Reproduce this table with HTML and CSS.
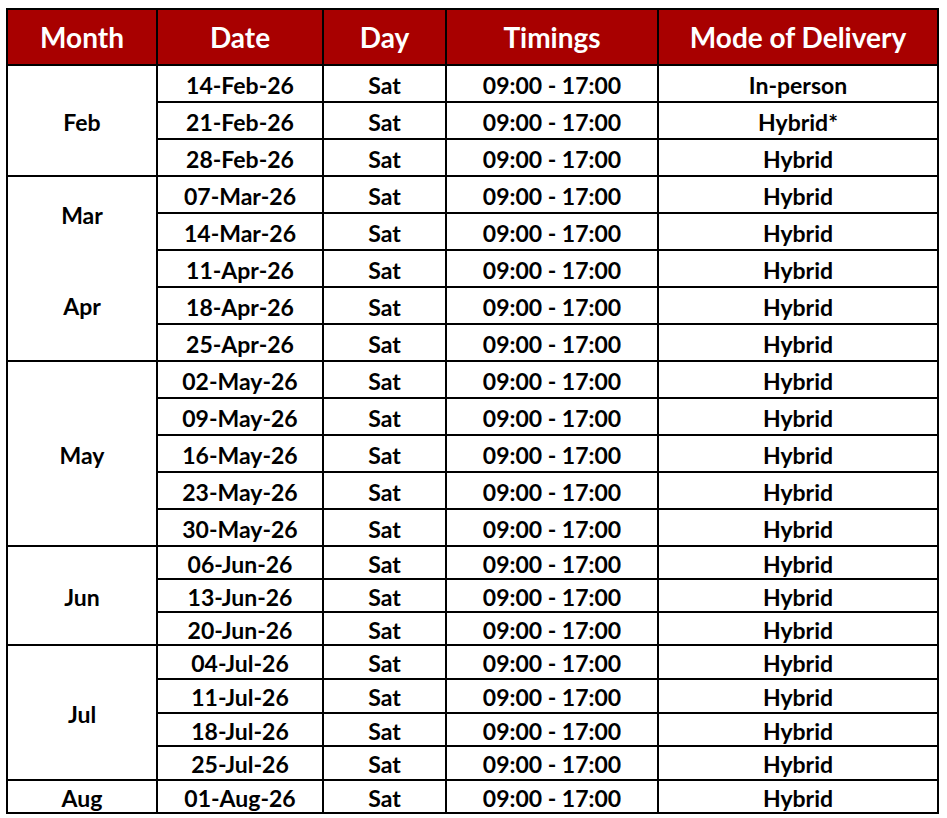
FILE: index.html
```html
<!DOCTYPE html>
<html lang="en">
<head>
<meta charset="utf-8">
<title>Schedule</title>
<link rel="stylesheet" href="styles.css">
</head>
<body>
<div class="schedule">
  <div class="head">Month</div>
  <div class="head">Date</div>
  <div class="head">Day</div>
  <div class="head">Timings</div>
  <div class="head">Mode of Delivery</div>

  <div class="month m3">Feb</div>
  <div class="cell">14-Feb-26</div><div class="cell">Sat</div><div class="cell">09:00 - 17:00</div><div class="cell">In-person</div>
  <div class="cell">21-Feb-26</div><div class="cell">Sat</div><div class="cell">09:00 - 17:00</div><div class="cell">Hybrid*</div>
  <div class="cell">28-Feb-26</div><div class="cell">Sat</div><div class="cell">09:00 - 17:00</div><div class="cell">Hybrid</div>

  <div class="month m5 split">
    <div class="part p2">Mar</div>
    <div class="part p3">Apr</div>
  </div>
  <div class="cell">07-Mar-26</div><div class="cell">Sat</div><div class="cell">09:00 - 17:00</div><div class="cell">Hybrid</div>
  <div class="cell">14-Mar-26</div><div class="cell">Sat</div><div class="cell">09:00 - 17:00</div><div class="cell">Hybrid</div>
  <div class="cell">11-Apr-26</div><div class="cell">Sat</div><div class="cell">09:00 - 17:00</div><div class="cell">Hybrid</div>
  <div class="cell">18-Apr-26</div><div class="cell">Sat</div><div class="cell">09:00 - 17:00</div><div class="cell">Hybrid</div>
  <div class="cell">25-Apr-26</div><div class="cell">Sat</div><div class="cell">09:00 - 17:00</div><div class="cell">Hybrid</div>

  <div class="month m5">May</div>
  <div class="cell">02-May-26</div><div class="cell">Sat</div><div class="cell">09:00 - 17:00</div><div class="cell">Hybrid</div>
  <div class="cell">09-May-26</div><div class="cell">Sat</div><div class="cell">09:00 - 17:00</div><div class="cell">Hybrid</div>
  <div class="cell">16-May-26</div><div class="cell">Sat</div><div class="cell">09:00 - 17:00</div><div class="cell">Hybrid</div>
  <div class="cell">23-May-26</div><div class="cell">Sat</div><div class="cell">09:00 - 17:00</div><div class="cell">Hybrid</div>
  <div class="cell">30-May-26</div><div class="cell">Sat</div><div class="cell">09:00 - 17:00</div><div class="cell">Hybrid</div>

  <div class="month m3">Jun</div>
  <div class="cell">06-Jun-26</div><div class="cell">Sat</div><div class="cell">09:00 - 17:00</div><div class="cell">Hybrid</div>
  <div class="cell">13-Jun-26</div><div class="cell">Sat</div><div class="cell">09:00 - 17:00</div><div class="cell">Hybrid</div>
  <div class="cell">20-Jun-26</div><div class="cell">Sat</div><div class="cell">09:00 - 17:00</div><div class="cell">Hybrid</div>

  <div class="month m4">Jul</div>
  <div class="cell">04-Jul-26</div><div class="cell">Sat</div><div class="cell">09:00 - 17:00</div><div class="cell">Hybrid</div>
  <div class="cell">11-Jul-26</div><div class="cell">Sat</div><div class="cell">09:00 - 17:00</div><div class="cell">Hybrid</div>
  <div class="cell">18-Jul-26</div><div class="cell">Sat</div><div class="cell">09:00 - 17:00</div><div class="cell">Hybrid</div>
  <div class="cell">25-Jul-26</div><div class="cell">Sat</div><div class="cell">09:00 - 17:00</div><div class="cell">Hybrid</div>

  <div class="month">Aug</div>
  <div class="cell">01-Aug-26</div><div class="cell">Sat</div><div class="cell">09:00 - 17:00</div><div class="cell">Hybrid</div>
</div>
</body>
</html>
```

FILE: styles.css
```css
html, body {
  margin: 0;
  padding: 0;
  background: #ffffff;
}

body {
  padding: 8px 0 0 6px;
  font-family: Lato, "Open Sans", "Liberation Sans", sans-serif;
  font-weight: 700;
  color: #000000;
}

.schedule {
  display: grid;
  grid-template-columns: 148px 164px 121px 210px 278px;
  grid-template-rows: 54px repeat(13, 35px) 31px 31px 31px 32px 32px 31px 32px 31px;
  gap: 2px;
  padding: 2px;
  background: #000000;
  width: max-content;
}

.head,
.cell,
.month {
  display: flex;
  align-items: center;
  justify-content: center;
  text-align: center;
  white-space: nowrap;
}

.head {
  background: #a80000;
  color: #ffffff;
  font-size: 28px;
  padding-bottom: 1px;
}

.cell,
.month {
  background: #ffffff;
  font-size: 23px;
  padding-top: 2px;
}

.m3 { grid-row: span 3; }
.m4 { grid-row: span 4; }
.m5 { grid-row: span 5; }

.split {
  flex-direction: column;
  align-items: stretch;
}

.part {
  display: flex;
  align-items: center;
  justify-content: center;
}

.p2 { flex: 2; }
.p3 { flex: 3; }
```
